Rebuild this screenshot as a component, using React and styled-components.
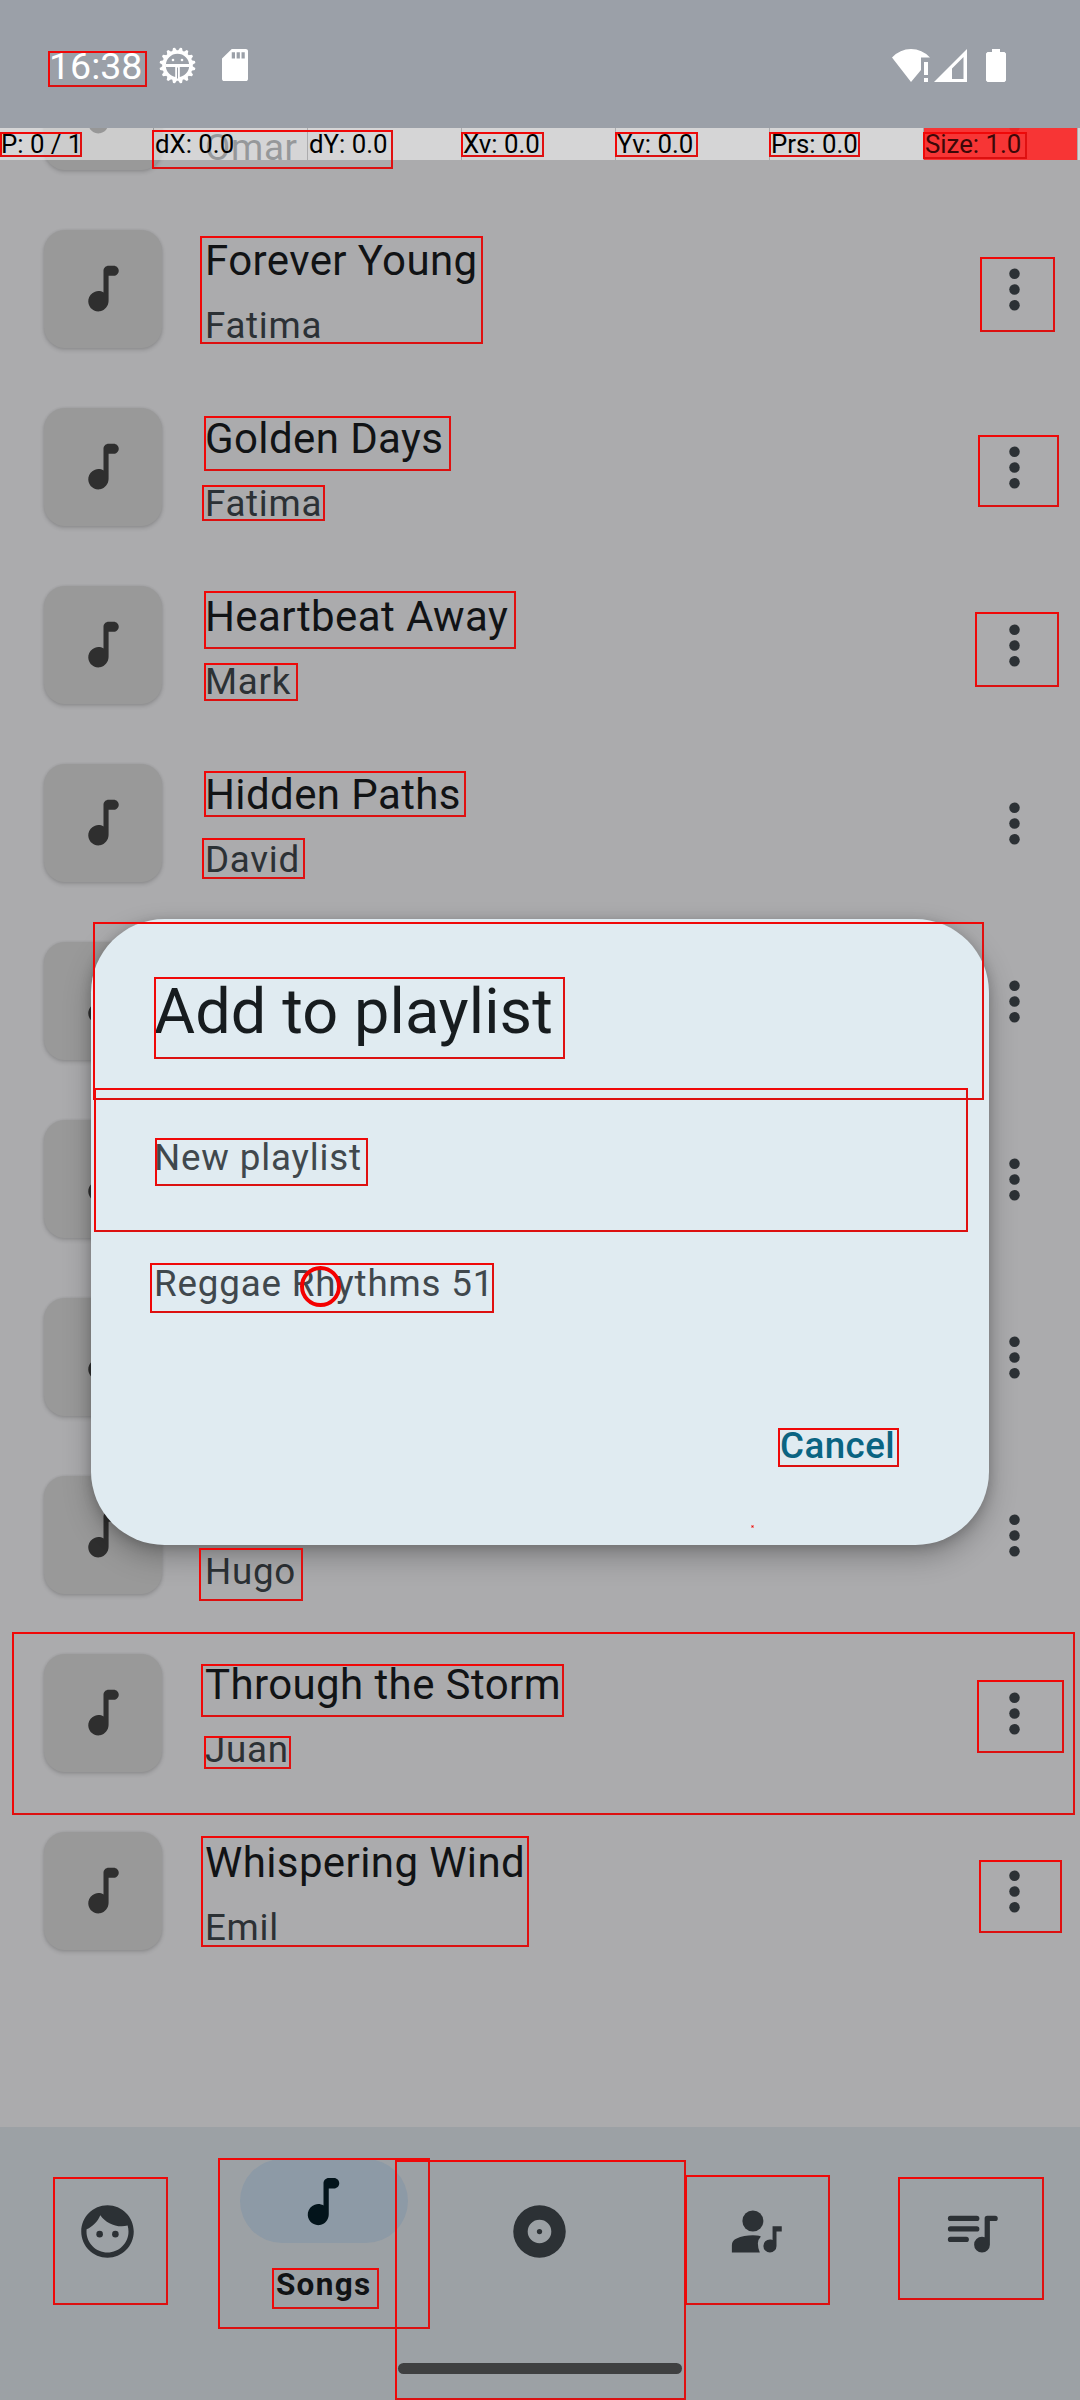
import React from "react";
import styled, { createGlobalStyle } from "styled-components";

const GlobalStyle = createGlobalStyle`
  *, *::before, *::after { box-sizing: border-box; }
  body { margin: 0; font-family: Roboto, "Noto Sans", sans-serif; }
`;

const Screen = styled.div`
  position: relative;
  display: flex;
  flex-direction: column;
  width: 1080px;
  height: 2400px;
  overflow: hidden;
  background: #ababad;
`;

const StatusBar = styled.header`
  display: flex;
  flex: none;
  align-items: flex-start;
  justify-content: space-between;
  height: 128px;
  padding: 44px 74px 0 49px;
  background: #9ba0a8;
  color: #fff;
`;

const StatusGroup = styled.div`
  display: flex;
  align-items: center;
  height: 42px;
`;

const Clock = styled.span`
  width: 110px;
  padding-top: 2px;
  font-size: 37.5px;
  line-height: 42px;
`;

const StatusIcon = styled.svg`
  display: block;
  flex: none;
  width: ${(p) => p.$w}px;
  height: ${(p) => p.$h}px;
  margin-left: ${(p) => p.$gap || 0}px;
`;

const SongList = styled.main`
  flex: 1;
  min-height: 0;
  overflow: hidden;
`;

const SongRows = styled.div`
  display: flex;
  flex-direction: column;
  margin-top: -106px;
`;

const SongRow = styled.div`
  display: flex;
  flex: none;
  align-items: flex-start;
  height: 178px;
  padding: 30px 34px 0 44px;
`;

const Cover = styled.div`
  display: flex;
  align-items: center;
  justify-content: center;
  width: 118px;
  height: 118px;
  margin-top: -0.5px;
  border-radius: 21px;
  background: #999;
  color: #2f2f2f;
  box-shadow: 0 2px 4px rgba(0, 0, 0, 0.16), 0 0 3px rgba(0, 0, 0, 0.08);
`;

const SongText = styled.div`
  display: flex;
  flex: 1;
  flex-direction: column;
  gap: 8px;
  margin: -1px 0 0 43px;
`;

const SongTitle = styled.div`
  height: 63px;
  color: #111315;
  font-size: 42px;
  line-height: 63px;
  letter-spacing: 0.4px;
`;

const SongArtist = styled.div`
  height: 52px;
  color: #2c3135;
  font-size: 36.75px;
  line-height: 52px;
  letter-spacing: 0.7px;
`;

const MenuButton = styled.div`
  display: flex;
  align-items: center;
  height: 118px;
  color: #2c3135;
`;

const Icon = styled.svg`
  display: block;
  width: ${(p) => p.$size || 63}px;
  height: ${(p) => p.$size || 63}px;
  fill: currentColor;
`;

const NavBar = styled.nav`
  display: flex;
  flex: none;
  flex-direction: column;
  align-items: center;
  height: 273px;
  background: #9ca1a5;
`;

const NavItems = styled.div`
  display: flex;
  width: 1080px;
  height: 236px;
  padding-right: 1px;
`;

const NavItem = styled.div`
  display: flex;
  flex: 1;
  flex-direction: column;
  align-items: center;
  padding-top: ${(p) => (p.$active ? 32 : 62)}px;
  color: ${(p) => (p.$active ? "#03141b" : "#2c3135")};
`;

const NavPill = styled.div`
  display: flex;
  align-items: center;
  justify-content: center;
  width: 168px;
  height: 84px;
  border-radius: 42px;
  background: ${(p) => (p.$active ? "#8d9aa6" : "transparent")};
`;

const NavLabel = styled.div`
  margin-top: 21px;
  color: #111315;
  font-size: 31.5px;
  font-weight: 700;
  line-height: 42px;
  letter-spacing: 1.31px;
`;

const GestureBar = styled.div`
  width: 284px;
  height: 11px;
  border-radius: 6px;
  background: #3f4041;
`;

const Dialog = styled.section`
  position: absolute;
  top: 919px;
  left: 91px;
  display: flex;
  flex-direction: column;
  width: 898px;
  height: 626px;
  padding: 51px 63px 0;
  border-radius: 73.5px;
  background: #e0ebf1;
  box-shadow: 0 12px 28px rgba(0, 0, 0, 0.26), 0 2px 12px rgba(0, 0, 0, 0.18);
`;

const DialogTitle = styled.h1`
  height: 84px;
  margin: 0;
  color: #171c1f;
  font-size: 63px;
  font-weight: 400;
  line-height: 84px;
  letter-spacing: 0.1px;
`;

const DialogOption = styled.div`
  height: 126px;
  color: #40484d;
  font-size: 36.75px;
  line-height: 126px;
  letter-spacing: 0.83px;
`;

const DialogOptions = styled.div`
  display: flex;
  flex-direction: column;
  margin-top: 41px;
`;

const DialogActions = styled.div`
  display: flex;
  justify-content: flex-end;
  margin-top: 73px;
  padding-right: 31px;
`;

const TextButton = styled.div`
  color: #0a6482;
  font-size: 36.75px;
  font-weight: 500;
  line-height: 52px;
  letter-spacing: 0.4px;
`;

const PointerBar = styled.div`
  position: absolute;
  top: 128px;
  left: 0;
  display: flex;
  gap: 1px;
  width: 1080px;
  height: 32px;
`;

const PointerCell = styled.div`
  flex: none;
  width: 153px;
  padding-left: 1px;
  overflow: hidden;
  background: ${(p) => (p.$alert ? "rgba(255, 40, 40, 0.9)" : "rgba(255, 255, 255, 0.5)")};
  color: ${(p) => (p.$alert ? "#3c0808" : "#000")};
  font-size: 25.8px;
  line-height: 32px;
  white-space: nowrap;
`;

const PointerRest = styled.div`
  flex: 1;
  background: rgba(255, 255, 255, 0.5);
`;

const Outline = styled.div`
  position: absolute;
  top: ${(p) => p.$top}px;
  left: ${(p) => p.$left}px;
  width: ${(p) => p.$width}px;
  height: ${(p) => p.$height}px;
  border: 2px solid;
  border-color: #f00808 #e01010 #dc1010 #f00808;
`;

const TapCircle = styled.div`
  position: absolute;
  top: 1266px;
  left: 300px;
  width: 41px;
  height: 41px;
  border: 4px solid #f40000;
  border-radius: 50%;
`;

const TapPoint = styled.div`
  position: absolute;
  top: 1525px;
  left: 751px;
  width: 3px;
  height: 3px;
  border: 1px solid #f08a8a;
  background: #c81616;
`;

const NotePath = () => (
  <path d="M12 5v8.55c-.94-.54-2.1-.75-3.33-.32-1.34.48-2.37 1.67-2.61 3.07-.46 2.74 1.86 5.08 4.59 4.65 1.96-.31 3.35-2.11 3.35-4.1V7h2c1.1 0 2-.9 2-2s-.9-2-2-2h-2c-1.1 0-2 .9-2 2z" />
);

const NoteIcon = ({ size }) => (
  <Icon $size={size} viewBox="0 0 24 24"><NotePath /></Icon>
);

const MoreIcon = () => (
  <Icon viewBox="0 0 24 24">
    <circle cx="12" cy="6" r="2" />
    <circle cx="12" cy="12" r="2" />
    <circle cx="12" cy="18" r="2" />
  </Icon>
);

const FaceIcon = () => (
  <Icon viewBox="0 0 24 24">
    <circle cx="9" cy="13" r="1.25" />
    <circle cx="15" cy="13" r="1.25" />
    <path d="M12 2C6.48 2 2 6.48 2 12s4.48 10 10 10 10-4.48 10-10S17.52 2 12 2zm0 18c-4.41 0-8-3.59-8-8 0-.29.02-.58.05-.86 2.36-1.05 4.23-2.98 5.21-5.37C11.07 8.33 14.05 10 17.42 10c.78 0 1.53-.09 2.25-.26.21.71.33 1.47.33 2.26 0 4.41-3.59 8-8 8z" />
  </Icon>
);

const AlbumIcon = () => (
  <Icon viewBox="0 0 24 24">
    <path d="M12 2a10 10 0 1 0 0 20 10 10 0 0 0 0-20zm0 14.5a4.5 4.5 0 1 1 0-9 4.5 4.5 0 0 1 0 9z" />
    <circle cx="12" cy="12" r="1" />
  </Icon>
);

const ArtistIcon = () => (
  <Icon viewBox="0 -960 960 960">
    <circle cx="440" cy="-640" r="160" />
    <path d="M740-560h140v80h-80v220q0 42-29 71t-71 29q-42 0-71-29t-29-71q0-42 29-71t71-29q8 0 18 1.500t22 6.500v-208Z" />
    <path d="M120-160v-112q0-34 17.500-58.500T184-368q62-30 126-42T440-422q32 0 62 4t60 13q-46 48-46 105 0 80 30 140Z" />
  </Icon>
);

const QueueIcon = () => (
  <Icon viewBox="0 0 24 24">
    <rect x="3" y="6" width="12" height="2" rx="1" />
    <rect x="3" y="10" width="12" height="2" rx="1" />
    <rect x="3" y="14" width="8" height="2" rx="1" />
    <path d="M18 6a1 1 0 0 0-1 1v7.180c-.31-.11-.65-.18-1-.18a3 3 0 1 0 3 3V8h2a1 1 0 1 0 0-2z" />
  </Icon>
);

const teeth = Array.from({ length: 16 }, (_, i) => i * 22.5);

const GearIcon = () => (
  <StatusIcon $w={37} $h={37} viewBox="-18.5 -18.5 37 37">
    <circle r="13.500" fill="none" stroke="#fff" strokeWidth="3.600" />
    {teeth.map((angle) => (
      <path key={angle} d="M-2.500-14.500L-1-18H1L2.500-14.500z" fill="#fff" transform={`rotate(${angle + 11.25})`} />
    ))}
    <path d="M-12-1.500H12V1.500H2.300V13H-2.300V1.500H-12z" fill="#fff" />
    <path d="M0 2V13" stroke="#9ba0a8" strokeWidth="1" />
    <circle cx="-4.500" cy="-5.500" r="1.300" fill="#fff" />
    <circle cx="4.500" cy="-5.500" r="1.300" fill="#fff" />
  </StatusIcon>
);

const SdIcon = () => (
  <StatusIcon $w={26} $h={32} $gap={26} viewBox="4 2 16 20" preserveAspectRatio="none">
    <path fill="#fff" d="M18.700 2h-8.700L4 8v12.700c0 .7.6 1.300 1.300 1.300h13.400c.7 0 1.300-.6 1.300-1.300V3.300c0-.7-.6-1.300-1.300-1.300zM12 8h-2V4h2zm3 0h-2V4h2zm3 0h-2V4h2z" />
  </StatusIcon>
);

const WifiIcon = () => (
  <StatusIcon $w={38} $h={33} viewBox="0 0 38 33">
    <path fill="#fff" d="M0 8.500Q8 0 19 0T38 8.500H29V21L19 33z" />
    <path fill="#fff" d="M32 13h4v13h-4zM32 29h4v4h-4z" />
  </StatusIcon>
);

const SignalIcon = () => (
  <StatusIcon $w={33} $h={33} $gap={4} viewBox="0 0 33 33">
    <path fill="#fff" fillRule="evenodd" d="M0 33L33 0V33zM18 19.500V30H29.500V8z" />
  </StatusIcon>
);

const BatteryIcon = () => (
  <StatusIcon $w={20} $h={33} $gap={19} viewBox="0 0 20 33">
    <path fill="#fff" d="M6 0h8v3h4.500L20 4.500V31.500L18.500 33H1.500L0 31.500V4.500L1.500 3H6z" />
  </StatusIcon>
);

const songs = [
  { title: "", artist: "Omar" },
  { title: "Forever Young", artist: "Fatima" },
  { title: "Golden Days", artist: "Fatima" },
  { title: "Heartbeat Away", artist: "Mark" },
  { title: "Hidden Paths", artist: "David" },
  { title: "", artist: "" },
  { title: "", artist: "" },
  { title: "", artist: "" },
  { title: "", artist: "Hugo" },
  { title: "Through the Storm", artist: "Juan" },
  { title: "Whispering Wind", artist: "Emil" },
];

const pointerValues = ["P: 0 / 1", "dX: 0.0", "dY: 0.0", "Xv: 0.0", "Yv: 0.0", "Prs: 0.0", "Size: 1.0"];

/* Bounds of the outlined elements: left, top, right, bottom. */
const outlines = [
  [48, 51, 147, 87],
  [0, 132, 82, 157],
  [152, 130, 393, 169],
  [461, 132, 544, 157],
  [615, 132, 698, 157],
  [769, 132, 860, 157],
  [923, 132, 1027, 159],
  [200, 236, 483, 344],
  [980, 257, 1055, 332],
  [204, 416, 451, 471],
  [202, 485, 325, 521],
  [978, 435, 1059, 507],
  [204, 591, 516, 649],
  [204, 663, 298, 701],
  [975, 612, 1059, 687],
  [204, 771, 466, 817],
  [202, 838, 305, 879],
  [93, 922, 984, 1100],
  [154, 977, 565, 1059],
  [94, 1088, 968, 1232],
  [155, 1138, 368, 1186],
  [150, 1263, 494, 1313],
  [778, 1428, 899, 1467],
  [199, 1548, 303, 1601],
  [12, 1632, 1075, 1815],
  [201, 1664, 564, 1717],
  [977, 1680, 1064, 1753],
  [204, 1736, 291, 1769],
  [201, 1836, 529, 1947],
  [979, 1860, 1062, 1933],
  [53, 2177, 168, 2305],
  [218, 2158, 430, 2329],
  [272, 2268, 379, 2309],
  [395, 2160, 686, 2400],
  [685, 2175, 830, 2305],
  [898, 2177, 1044, 2300],
];

export default function App() {
  return (
    <Screen>
      <GlobalStyle />
      <StatusBar>
        <StatusGroup>
          <Clock>16:38</Clock>
          <GearIcon />
          <SdIcon />
        </StatusGroup>
        <StatusGroup>
          <WifiIcon />
          <SignalIcon />
          <BatteryIcon />
        </StatusGroup>
      </StatusBar>

      <SongList>
        <SongRows>
          {songs.map((song, i) => (
            <SongRow key={i}>
              <Cover><NoteIcon size={61} /></Cover>
              <SongText>
                <SongTitle>{song.title}</SongTitle>
                <SongArtist>{song.artist}</SongArtist>
              </SongText>
              <MenuButton><MoreIcon /></MenuButton>
            </SongRow>
          ))}
        </SongRows>
      </SongList>

      <NavBar>
        <NavItems>
          <NavItem><NavPill><FaceIcon /></NavPill></NavItem>
          <NavItem $active>
            <NavPill $active><NoteIcon size={63} /></NavPill>
            <NavLabel>Songs</NavLabel>
          </NavItem>
          <NavItem><NavPill><AlbumIcon /></NavPill></NavItem>
          <NavItem><NavPill><ArtistIcon /></NavPill></NavItem>
          <NavItem><NavPill><QueueIcon /></NavPill></NavItem>
        </NavItems>
        <GestureBar />
      </NavBar>

      <Dialog>
        <DialogTitle>Add to playlist</DialogTitle>
        <DialogOptions>
          <DialogOption>New playlist</DialogOption>
          <DialogOption>Reggae Rhythms 51</DialogOption>
        </DialogOptions>
        <DialogActions><TextButton>Cancel</TextButton></DialogActions>
      </Dialog>

      <PointerBar>
        {pointerValues.map((value, i) => (
          <PointerCell key={value} $alert={i === 6}>{value}</PointerCell>
        ))}
        <PointerRest />
      </PointerBar>

      {outlines.map(([left, top, right, bottom]) => (
        <Outline key={`${left}-${top}`} $left={left} $top={top} $width={right - left} $height={bottom - top} />
      ))}
      <TapCircle />
      <TapPoint />
    </Screen>
  );
}
